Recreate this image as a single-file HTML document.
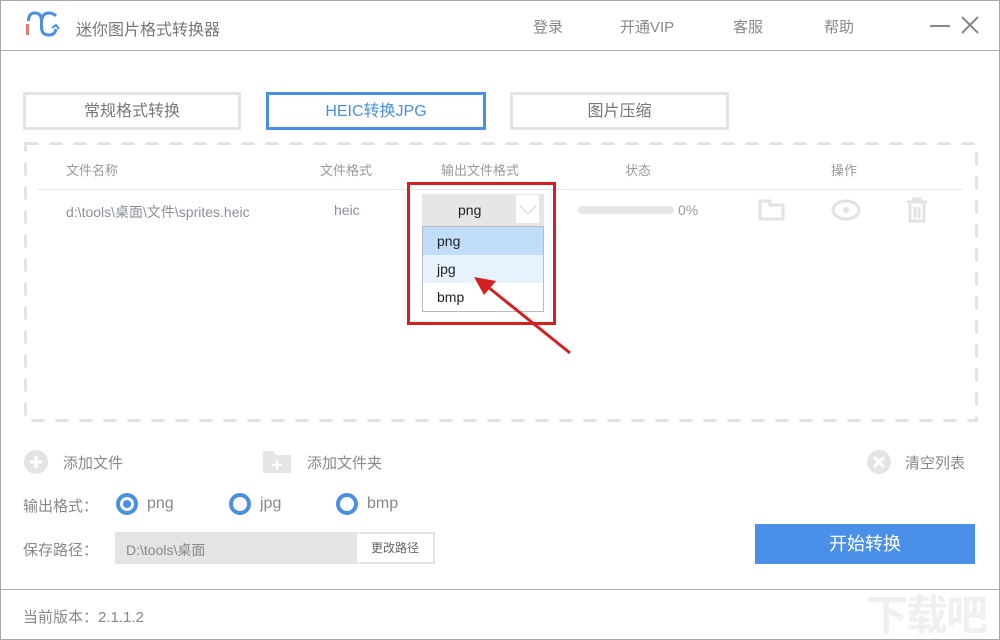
<!DOCTYPE html>
<html><head><meta charset="utf-8"><style>
*{margin:0;padding:0;box-sizing:border-box}
body{width:1000px;height:640px;background:#fff;position:relative;overflow:hidden;font-family:"Liberation Sans","Noto Sans CJK SC",sans-serif;color:#888}
.a{position:absolute;white-space:nowrap}
.tab{position:absolute;top:92px;height:38px;border:3px solid #e4e4e4;text-align:center;line-height:34px;font-size:16px;color:#777}
.hd{font-size:13px;color:#999;top:160px}
.rad{position:absolute;width:22px;height:22px;border:4px solid #4a90e2;border-radius:50%;top:493px}
</style></head><body>
<div class="a" style="left:0;top:0;width:1000px;height:640px;border:1px solid #a8a8a8"></div>
<div class="a" style="left:0;top:50px;width:1000px;height:1px;background:#b0b0b0"></div>
<div class="a" style="left:0;top:589px;width:1000px;height:1px;background:#b0b0b0"></div>
<svg class="a" style="left:20px;top:8px" width="45" height="32" viewBox="0 0 45 32">
<rect x="6" y="16" width="3" height="11" fill="#e07a6a"/>
<path d="M8.5 13 Q8.5 5 15 5 Q21.5 5 21.5 13 V19 Q21.5 27 29 27 Q35 27 36 21" fill="none" stroke="#4a8fe0" stroke-width="3"/>
<path d="M36 8 Q33 5 29 5 Q23 5 22 11" fill="none" stroke="#4a8fe0" stroke-width="3"/>
<path d="M32 20 l4 -3 l3 4" fill="none" stroke="#4a8fe0" stroke-width="2"/>
</svg>
<div class="a" style="left:76px;top:16px;font-size:16px;color:#777">迷你图片格式转换器</div>
<div class="a" style="left:533px;top:16px;font-size:15px;color:#888">登录</div>
<div class="a" style="left:620px;top:16px;font-size:15px;color:#888">开通VIP</div>
<div class="a" style="left:733px;top:16px;font-size:15px;color:#888">客服</div>
<div class="a" style="left:824px;top:16px;font-size:15px;color:#888">帮助</div>
<div class="a" style="left:930px;top:25px;width:20px;height:2px;background:#888"></div>
<svg class="a" style="left:960px;top:15px" width="20" height="20"><path d="M2 2 L18 18 M18 2 L2 18" stroke="#888" stroke-width="2"/></svg>
<div class="tab" style="left:23px;width:218px">常规格式转换</div>
<div class="tab" style="left:266px;width:220px;border-color:#4a8fe0;color:#4a8fe0">HEIC转换JPG</div>
<div class="tab" style="left:510px;width:219px">图片压缩</div>
<svg class="a" style="left:23px;top:141px" width="956" height="282"><rect x="2.5" y="2.5" width="951" height="277" fill="none" stroke="#e2e2e2" stroke-width="3" stroke-dasharray="13 11"/></svg>
<div class="a hd" style="left:66px">文件名称</div>
<div class="a hd" style="left:320px">文件格式</div>
<div class="a hd" style="left:441px">输出文件格式</div>
<div class="a hd" style="left:625px">状态</div>
<div class="a hd" style="left:831px">操作</div>
<div class="a" style="left:37px;top:189px;width:926px;height:1px;background:#e6e6e6"></div>
<div class="a" style="left:66px;top:202px;font-size:14px;color:#8a8f98">d:\tools\桌面\文件\sprites.heic</div>
<div class="a" style="left:334px;top:202px;font-size:14px;color:#8a8f98">heic</div>
<div class="a" style="left:422px;top:194px;width:122px;height:32px;background:#e6e6e6"></div>
<div class="a" style="left:458px;top:202px;font-size:14px;color:#222">png</div>
<div class="a" style="left:516px;top:195px;width:23px;height:28px;background:#fff"></div>
<svg class="a" style="left:518px;top:204px" width="20" height="12"><path d="M2 2 L10 10 L18 2" fill="none" stroke="#ddd" stroke-width="1.5"/></svg>
<div class="a" style="left:422px;top:226px;width:122px;height:86px;border:1px solid #bbb;background:#fff"></div>
<div class="a" style="left:423px;top:227px;width:120px;height:28px;background:#c0defa"></div>
<div class="a" style="left:423px;top:255px;width:120px;height:28px;background:#e6f2fd"></div>
<div class="a" style="left:437px;top:233px;font-size:14px;color:#222">png</div>
<div class="a" style="left:437px;top:261px;font-size:14px;color:#222">jpg</div>
<div class="a" style="left:437px;top:289px;font-size:14px;color:#222">bmp</div>
<div class="a" style="left:407px;top:182px;width:149px;height:143px;border:3px solid #d42020"></div>
<svg class="a" style="left:460px;top:265px" width="120" height="100"><path d="M110 88 L28 22" stroke="#d42020" stroke-width="3"/><path d="M14 12 L36 16 L24 30 Z" fill="#d42020"/></svg>
<div class="a" style="left:578px;top:206px;width:96px;height:8px;border-radius:4px;background:#e6e6e6"></div>
<div class="a" style="left:678px;top:202px;font-size:14px;color:#999">0%</div>
<svg class="a" style="left:758px;top:198px" width="28" height="24"><path d="M2 3 H12 V7 H25 V21 H2 Z" fill="none" stroke="#e2e2e2" stroke-width="3"/></svg>
<svg class="a" style="left:830px;top:198px" width="32" height="24"><ellipse cx="16" cy="12" rx="13" ry="9" fill="none" stroke="#e2e2e2" stroke-width="3"/><circle cx="16" cy="12" r="3" fill="#e2e2e2"/></svg>
<svg class="a" style="left:904px;top:196px" width="26" height="28"><path d="M3 6 H23 M10 6 V3 H16 V6 M6 8 V25 H20 V8 M11 11 V22 M15 11 V22" fill="none" stroke="#e2e2e2" stroke-width="3"/></svg>
<svg class="a" style="left:23px;top:449px" width="26" height="26"><circle cx="13" cy="13" r="12" fill="#e4e4e4"/><path d="M13 7 V19 M7 13 H19" stroke="#fff" stroke-width="3"/></svg>
<div class="a" style="left:63px;top:452px;font-size:15px;color:#888">添加文件</div>
<svg class="a" style="left:262px;top:450px" width="30" height="24"><path d="M1 1 H11 L14 5 H29 V23 H1 Z" fill="#e6e6e6"/><path d="M15 10 V20 M10 15 H20" stroke="#fff" stroke-width="2"/></svg>
<div class="a" style="left:307px;top:452px;font-size:15px;color:#888">添加文件夹</div>
<svg class="a" style="left:866px;top:449px" width="26" height="26"><circle cx="13" cy="13" r="12" fill="#e4e4e4"/><path d="M8 8 L18 18 M18 8 L8 18" stroke="#fff" stroke-width="3"/></svg>
<div class="a" style="left:905px;top:452px;font-size:15px;color:#888">清空列表</div>
<div class="a" style="left:23px;top:495px;font-size:15px;color:#888">输出格式：</div>
<div class="rad" style="left:116px"></div>
<div class="a" style="left:123px;top:500px;width:8px;height:8px;border-radius:50%;background:#4a90e2"></div>
<div class="a" style="left:147px;top:495px;font-size:16px;color:#888">png</div>
<div class="rad" style="left:229px"></div>
<div class="a" style="left:260px;top:495px;font-size:16px;color:#888">jpg</div>
<div class="rad" style="left:336px"></div>
<div class="a" style="left:367px;top:495px;font-size:16px;color:#888">bmp</div>
<div class="a" style="left:23px;top:539px;font-size:15px;color:#888">保存路径：</div>
<div class="a" style="left:115px;top:532px;width:320px;height:32px;background:#e4e4e4"></div>
<div class="a" style="left:126px;top:540px;font-size:14px;color:#888">D:\tools\桌面</div>
<div class="a" style="left:357px;top:534px;width:76px;height:28px;background:#fff;text-align:center;line-height:28px;font-size:12px;color:#666">更改路径</div>
<div class="a" style="left:755px;top:524px;width:220px;height:40px;background:#4a8fe8;color:#fff;font-size:18px;text-align:center;line-height:40px">开始转换</div>
<div class="a" style="left:23px;top:606px;font-size:15px;color:#888">当前版本：2.1.1.2</div>
<div class="a" style="left:866px;top:592px;width:134px;height:48px;overflow:hidden"><div style="font-size:42px;line-height:48px;color:#f0f0f0;font-weight:bold;letter-spacing:-2px">下载吧</div></div>
</body></html>
